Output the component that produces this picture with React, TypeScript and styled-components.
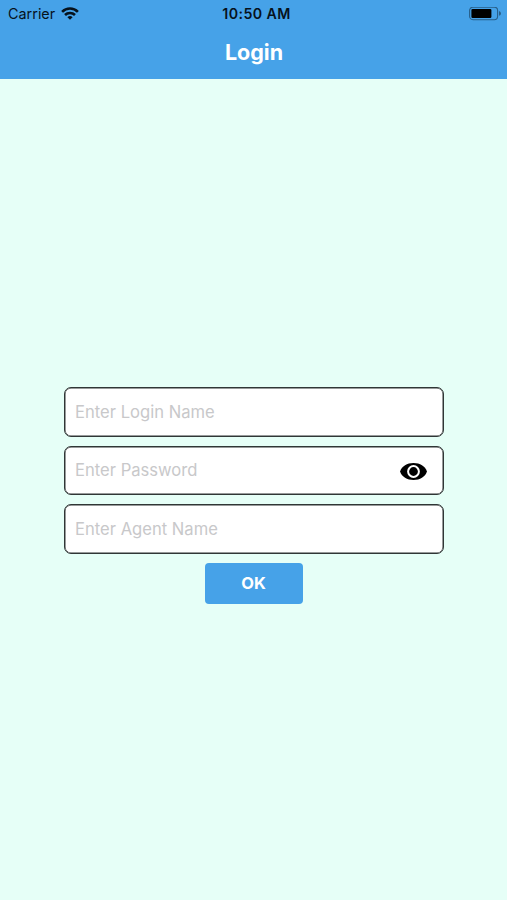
import React, { useState } from "react";
import styled, { createGlobalStyle } from "styled-components";

const GlobalStyle = createGlobalStyle`
  * { box-sizing: border-box; }
  body { margin: 0; background: #e6fff7; font-family: Inter, "Liberation Sans", sans-serif; }
`;

const Screen = styled.main`
  width: 100%;
  height: 100vh;
  display: flex;
  flex-direction: column;
  background: #e6fff7;
`;

const Header = styled.header`
  flex: none;
  height: 79px;
  background: #46a2e8;
`;

const StatusBar = styled.div`
  height: 27px;
  padding: 0 5px 0 8px;
  display: grid;
  grid-template-columns: 1fr auto 1fr;
  align-items: center;
  color: #06121c;
`;

const Carrier = styled.span`
  display: flex;
  align-items: center;
  gap: 6px;
  font-size: 14.4px;
  line-height: 27px;
`;

const Clock = styled.time`
  padding-left: 3px;
  font-size: 14.2px;
  font-weight: 600;
  letter-spacing: 0.4px;
`;

const Battery = styled.svg`
  justify-self: end;
`;

const Title = styled.h1`
  margin: 0;
  padding-left: 1px;
  font-size: 21.5px;
  line-height: 50px;
  font-weight: 700;
  text-align: center;
  color: #fff;
`;

const Form = styled.form`
  width: 380px;
  margin: 308px auto 0;
  display: flex;
  flex-direction: column;
  align-items: center;
  gap: 9.2px;
`;

const Field = styled.label`
  width: 100%;
  height: 49.5px;
  display: flex;
  align-items: center;
  padding: 0 16px 0 10.5px;
  border: 1px solid #303636;
  box-shadow: inset 0 0 0 0.5px #303636;
  border-radius: 7px;
  background: #fff;
`;

const Input = styled.input`
  flex: 1;
  min-width: 0;
  height: 30px;
  padding: 0;
  border: 0;
  outline: 0;
  background: transparent;
  font: 400 16.6px Inter, "Liberation Sans", sans-serif;
  color: #111;
  &::placeholder { color: #c8c8ca; opacity: 1; }
`;

const EyeButton = styled.button`
  display: flex;
  padding: 2px 0 0;
  border: 0;
  background: none;
`;

const Submit = styled.button`
  width: 98px;
  height: 41px;
  padding: 0 0 1px;
  border: 0;
  border-radius: 4px;
  background: #46a2e8;
  color: #fff;
  font: 700 16.5px Inter, "Liberation Sans", sans-serif;
`;

export default function App() {
  const [visible, setVisible] = useState(false);
  return (
    <>
      <GlobalStyle />
      <Screen>
        <Header>
          <StatusBar>
            <Carrier>
              Carrier
              <svg width="18" height="13" viewBox="0 0 18 13" fill="none" stroke="#06121c" strokeWidth="2.6">
                <path d="M1.1 4.8a11.2 11.2 0 0 1 15.8 0" />
                <path d="M4 8a7.1 7.1 0 0 1 10 0" />
                <path d="M9 12.8 6.4 10.2a3.7 3.7 0 0 1 5.2 0Z" fill="#06121c" stroke="none" />
              </svg>
            </Carrier>
            <Clock>10:50 AM</Clock>
            <Battery width="33" height="14" viewBox="0 0 33 14">
              <rect x="0.6" y="0.1" width="28" height="12.6" rx="3.4" fill="none" stroke="#285f88" strokeWidth="1.1" />
              <rect x="2.4" y="1.9" width="20" height="9" rx="1.2" fill="#000" />
              <path d="M30 4.1q2 .6 2 2.3t-2 2.3Z" fill="#285f88" />
            </Battery>
          </StatusBar>
          <Title>Login</Title>
        </Header>
        <Form onSubmit={(e) => e.preventDefault()}>
          <Field>
            <Input placeholder="Enter Login Name" />
          </Field>
          <Field>
            <Input type={visible ? "text" : "password"} placeholder="Enter Password" />
            <EyeButton type="button" aria-label="Toggle password" onClick={() => setVisible(!visible)}>
              <svg width="27" height="17" viewBox="0 0 27 17">
                <path d="M0 8.5C2 3 7 0 13.5 0S25 3 27 8.5C25 14 20 17 13.5 17S2 14 0 8.5Z" />
                <circle cx="13.5" cy="8.5" r="5.4" fill="#000" stroke="#fff" strokeWidth="2" />
              </svg>
            </EyeButton>
          </Field>
          <Field>
            <Input placeholder="Enter Agent Name" />
          </Field>
          <Submit>OK</Submit>
        </Form>
      </Screen>
    </>
  );
}
